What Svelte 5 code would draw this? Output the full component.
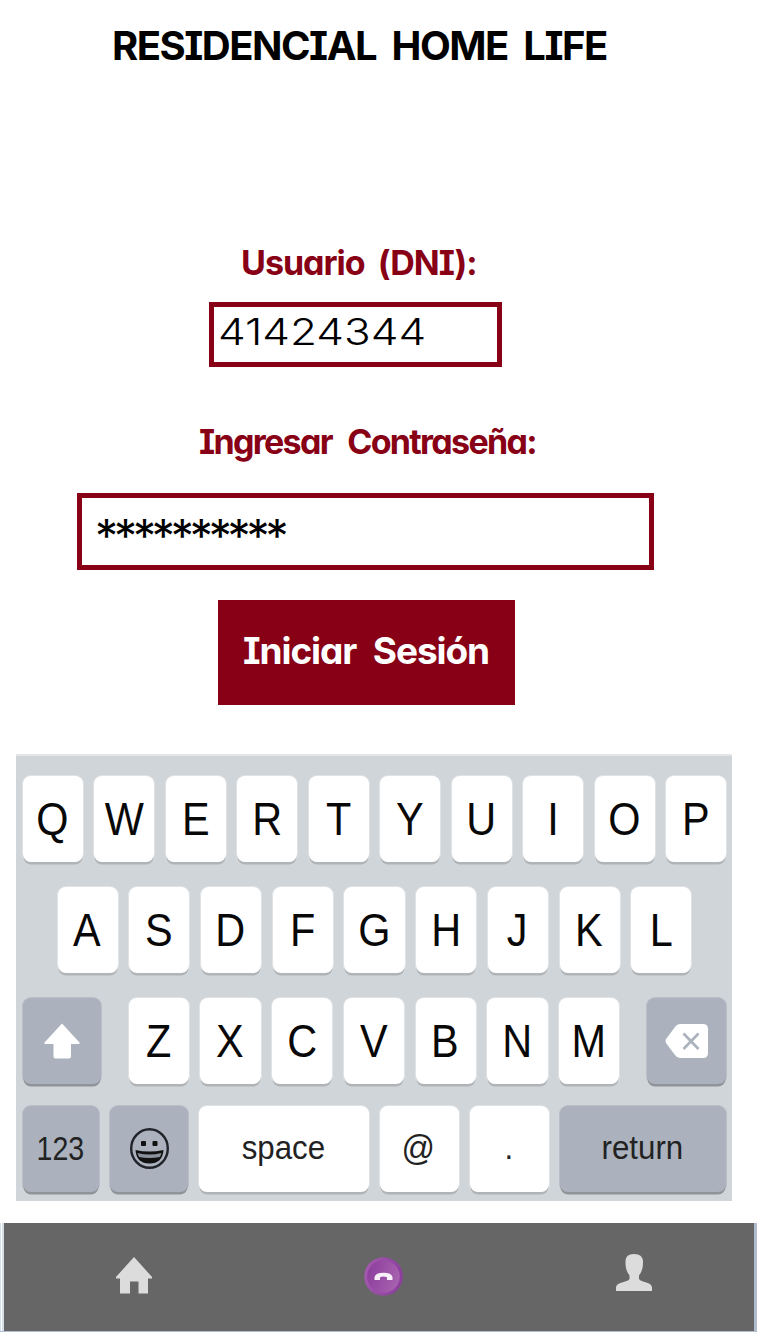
<script>
  const top = [...'QWERTYUIOP'];
  const middle = [...'ASDFGHJKL'];
  const bottom = [...'ZXCVBNM'];
</script>

<main class="page">
  <h1 class="title"><span>RESIDENCIAL HOME LIFE</span></h1>

  <form class="login" onsubmit={(e) => e.preventDefault()}>
    <div class="label user-label"><span>Usuario (DNI):</span></div>
    <div class="field user-field"><span>41424344</span></div>
    <div class="label pass-label"><span>Ingresar Contraseña:</span></div>
    <div class="field pass-field"><span>**********</span></div>
    <button class="submit"><span>Iniciar Sesión</span></button>
  </form>

  <section class="keyboard">
    <div class="row">
      {#each top as k}<div class="key"><span>{k}</span></div>{/each}
    </div>
    <div class="row second">
      {#each middle as k}<div class="key"><span>{k}</span></div>{/each}
    </div>
    <div class="row third">
      <div class="key dark">
        <svg width="36" height="36" viewBox="0 0 36 36"><path d="M18 .5 35.5 19.5V21H27V33.5Q27 35.5 25 35.5H11.5Q9.500 35.500 9.500 33.500V21H.5V19.500Z" fill="#fff" /></svg>
      </div>
      <div class="letters">
        {#each bottom as k}<div class="key"><span>{k}</span></div>{/each}
      </div>
      <div class="key dark">
        <svg width="44" height="36" viewBox="0 0 44 36">
          <path d="M15 1H38Q43 1 43 6V30Q43 35 38 35H15Q12 35 10 32L1 20Q0 18 1 16L10 4Q12 1 15 1Z" fill="#fff" />
          <path d="M18.500 10.500 33.500 26M33.500 10.500 18.500 26" stroke="#abb2be" stroke-width="2.600" />
        </svg>
      </div>
    </div>
    <div class="row fourth">
      <div class="key dark word"><span class="digits">123</span></div>
      <div class="key dark">
        <svg width="40" height="42" viewBox="0 0 40 42">
          <ellipse cx="20.500" cy="20.500" rx="18.300" ry="19.300" fill="none" stroke="#20242a" stroke-width="2.400" />
          <rect x="12" y="13" width="5" height="5" rx="1" fill="#111" /><rect x="23.500" y="13" width="5" height="5" rx="1" fill="#111" />
          <path d="M6.500 22Q20 25 34.500 22Q33.500 35.500 20.500 35.500Q7.500 35.500 6.500 22Z" fill="#111" />
          <path d="M8.500 25Q20 28 32.500 25L31 29Q20 31 10 29Z" fill="#8b929d" />
        </svg>
      </div>
      <div class="key word"><span>space</span></div>
      <div class="key word"><span class="at">@</span></div>
      <div class="key word"><span>.</span></div>
      <div class="key dark word"><span>return</span></div>
    </div>
  </section>

  <nav class="tabs">
    <svg class="home" width="36" height="37" viewBox="0 0 36 37"><path d="M18 0 36 20V21.500H32V36.500H22.500V24.500H14V36.500H4V21.500H0V20Z" fill="#dcdcdc" /></svg>
    <svg class="call" width="40" height="40" viewBox="0 0 40 40">
      <defs><linearGradient id="disc" x1="0" y1="0" x2="1" y2="0.300"><stop offset="0" stop-color="#8b3b9c" /><stop offset="1" stop-color="#a560ae" /></linearGradient>
      <linearGradient id="rim" x1="0" y1="0" x2="1" y2="0.200"><stop offset="0" stop-color="#a45baf" /><stop offset="1" stop-color="#8d3f9d" /></linearGradient></defs>
      <circle cx="19.500" cy="19.500" r="19.300" fill="url(#rim)" /><circle cx="19.500" cy="19.500" r="16.300" fill="url(#disc)" />
      <path d="M10.500 23V20Q11.500 15.700 19.500 15.700Q27.500 15.700 28.500 20V23H23V20.200Q19.500 18.600 16 20.200V23Z" fill="#f7f0f8" />
    </svg>
    <svg class="person" width="36" height="37" viewBox="0 0 36 37"><path d="M18 0C24 0 27 3 27 7.500C27 13 26.500 17 23 21.500V25C25 28.500 36 28 36 33.500V37H0V33.500C0 28 11.500 28.500 13.500 25V21.500C10 17 9.500 13 9.500 7.500C9.500 3 12 0 18 0Z" fill="#dcdcdc" /></svg>
  </nav>
</main>

<style>
  :global(body) { margin: 0; background: #fff; }
  .page { width: 757px; height: 1332px; display: flex; flex-direction: column; overflow: hidden; color: #000; font-family: "Comic Sans MS", Inter, sans-serif; font-feature-settings: "cv08", "cv11", "ss02"; }
  span { display: block; white-space: nowrap; flex: none; }
  .title { margin: 0; height: 92px; padding-left: 112px; display: flex; align-items: center; font-size: 40px; line-height: 92px; font-weight: 700; letter-spacing: -1.500px; word-spacing: 7.500px; }
  .login { height: 662px; padding-top: 143px; box-sizing: border-box; display: flex; flex-direction: column; align-items: flex-start; }
  .label { color: #880015; font-weight: 650; font-size: 34px; line-height: 56px; height: 56px; letter-spacing: -1.700px; word-spacing: 9px; }
  .user-label { margin-left: 241px; letter-spacing: -1px; word-spacing: 6px; }
  .field { box-sizing: border-box; border: 5px solid #880015; }
  .user-field { margin: 11px 0 0 209px; width: 293px; height: 65px; padding-left: 4px; font: 300 37px/49px Inter, sans-serif; }
  .user-field span { width: max-content; transform: scaleX(1.190); transform-origin: left; }
  .pass-label { margin: 47px 0 0 199px; }
  .pass-field { margin: 23px 0 0 77px; width: 577px; height: 77px; padding-left: 13px; font-size: 46px; font-weight: 400; line-height: 76px; letter-spacing: -4.100px; }
  .submit { margin: 30px 0 0 218px; width: 297px; height: 105px; padding: 0 0 4px 25px; border: 0; background: #880015; color: #fff; font: 700 37px/100px "Comic Sans MS", Inter, sans-serif; font-feature-settings: inherit; letter-spacing: -1.100px; word-spacing: 9px; display: flex; align-items: center; }
  .keyboard { flex: none; margin-left: 16px; width: 716px; height: 447px; box-sizing: border-box; border-top: 2px solid #e3e6e8; background: #d0d5d9; padding: 20px 6px 0 7px; font-family: "Liberation Sans", Arial, sans-serif; font-feature-settings: normal; }
  .row { display: grid; grid-template-columns: repeat(10, 1fr); gap: 11.500px; height: 86px; margin-bottom: 25px; }
  .second { grid-template-columns: repeat(9, 1fr); padding: 0 34.500px; }
  .third { grid-template-columns: 78px 491px 79px; gap: 0; margin-bottom: 22px; justify-content: space-between; }
  .letters { display: grid; grid-template-columns: repeat(7, 1fr); gap: 11.500px; }
  .fourth { grid-template-columns: 76px 78px 170px 79px 79px 166px; gap: 11px; }
  .key { border-radius: 8px; background: #fff; box-shadow: 0 3px 0 -0.500px #b0b4b7, 0 0 0 1px #dfe3e6; display: flex; align-items: center; justify-content: center; font-size: 46px; line-height: 1; color: #080808; }
  .key span { transform: translateX(-.5px) scaleX(.9); }
  .dark { background: #abb2be; box-shadow: 0 3px 0 -0.500px #8f9499, 0 0 0 1px #b8bfc8; }
  .word { font-size: 34px; color: #222; }
  .word span { transform: translate(-1px, -2px) scaleX(.92); }
  .word .digits { transform: translate(-1px, -1px) scaleX(.84); }
  .word .at { transform: translate(-1px, -2px) scale(.97, 1.050); }
  .tabs { flex: none; margin-top: 22px; height: 109px; box-sizing: border-box; border: solid #b0bccf; border-width: 0 3px 1px 0; background: linear-gradient(90deg, #d5dfec 1px, #fff 1px 2px, #d5dfec 2px 4px, #666 4px); display: flex; align-items: flex-start; }
  .home { margin: 34px 0 0 116px; }
  .call { margin: 34px 0 0 212px; }
  .person { margin: 31px 0 0 212px; }
</style>
